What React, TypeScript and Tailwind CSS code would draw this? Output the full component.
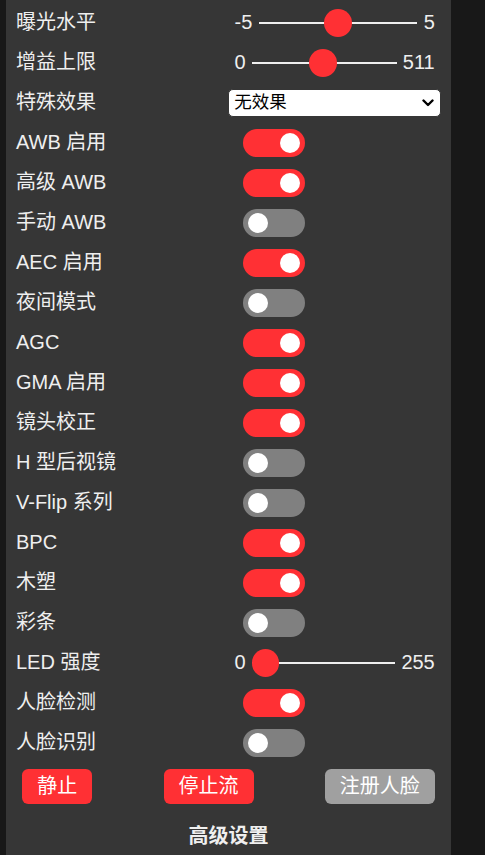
type Row =
  | { kind: "range"; label: string; min: number; max: number; value: number }
  | { kind: "select"; label: string; value: string }
  | { kind: "switch"; label: string; on: boolean }

const rows: Row[] = [
  { kind: "range", label: "曝光水平", min: -5, max: 5, value: 0 },
  { kind: "range", label: "增益上限", min: 0, max: 511, value: 249 },
  { kind: "select", label: "特殊效果", value: "无效果" },
  { kind: "switch", label: "AWB 启用", on: true },
  { kind: "switch", label: "高级 AWB", on: true },
  { kind: "switch", label: "手动 AWB", on: false },
  { kind: "switch", label: "AEC 启用", on: true },
  { kind: "switch", label: "夜间模式", on: false },
  { kind: "switch", label: "AGC", on: true },
  { kind: "switch", label: "GMA 启用", on: true },
  { kind: "switch", label: "镜头校正", on: true },
  { kind: "switch", label: "H 型后视镜", on: false },
  { kind: "switch", label: "V-Flip 系列", on: false },
  { kind: "switch", label: "BPC", on: true },
  { kind: "switch", label: "木塑", on: true },
  { kind: "switch", label: "彩条", on: false },
  { kind: "range", label: "LED 强度", min: 0, max: 255, value: 0 },
  { kind: "switch", label: "人脸检测", on: true },
  { kind: "switch", label: "人脸识别", on: false },
]

function RangeControl({ min, max, value }: { min: number; max: number; value: number }) {
  const f = (value - min) / (max - min)
  return (
    <div className="flex flex-1 items-center">
      <span className="px-[6.25px]">{min}</span>
      <div className="relative h-[27.5px] flex-1">
        <div className="absolute top-[12.5px] right-0 left-0 h-[2.5px] bg-[#efefef]" />
        <div
          className="absolute top-0 h-[27.5px] w-[27.5px] rounded-full bg-[#ff3034]"
          style={{ left: `calc(${f * 100}% - ${f * 27.5}px)` }}
        />
      </div>
      <span className="px-[6.25px]">{max}</span>
    </div>
  )
}

function SelectControl({ value }: { value: string }) {
  return (
    <div className="flex h-[27.5px] flex-1 items-center justify-between rounded-[5px] border-[1.25px] border-[#363636] bg-white pr-[6px] pl-[5px] text-[17.5px] leading-none text-black">
      <span>{value}</span>
      <svg width="12" height="8" viewBox="0 0 12 8" fill="none">
        <polyline points="1.5,1.5 6,6 10.5,1.5" stroke="#000" strokeWidth="2.4" strokeLinecap="round" strokeLinejoin="round" />
      </svg>
    </div>
  )
}

function Switch({ on }: { on: boolean }) {
  return (
    <div
      className={`ml-[14.25px] flex h-[27.5px] w-[62.5px] items-center rounded-full px-[5px] ${
        on ? "justify-end bg-[#ff3034]" : "justify-start bg-[#808080]"
      }`}
    >
      <div className="h-[20px] w-[20px] rounded-full bg-white" />
    </div>
  )
}

export default function App() {
  return (
    <div
      className="min-h-screen overflow-hidden bg-[#181818] pl-[6px] text-[20px] text-[#efefef]"
      style={{ fontFamily: '"Liberation Sans", Arial, "Noto Sans CJK SC", sans-serif' }}
    >
      <div className="-mt-[7px] flex w-[445px] flex-col rounded-[5px] bg-[#363636] px-[10px] pt-[10px] pb-[60px]">
        {rows.map((row) => (
          <div key={row.label} className="my-[6.25px] flex h-[27.5px] items-center leading-[27.5px]">
            <div className="w-[212.25px] shrink-0 pr-[12.5px] whitespace-nowrap">{row.label}</div>
            {row.kind === "range" && <RangeControl min={row.min} max={row.max} value={row.value} />}
            {row.kind === "select" && <SelectControl value={row.value} />}
            {row.kind === "switch" && <Switch on={row.on} />}
          </div>
        ))}
        <div className="flex justify-between">
          <button className="m-[6.25px] rounded-[6.25px] bg-[#ff3034] px-[15px] text-[20px] leading-[35px] text-white">
            静止
          </button>
          <button className="m-[6.25px] rounded-[6.25px] bg-[#ff3034] px-[15px] text-[20px] leading-[35px] text-white">
            停止流
          </button>
          <button className="m-[6.25px] rounded-[6.25px] bg-[#a0a0a0] px-[15px] text-[20px] leading-[35px] text-white">
            注册人脸
          </button>
        </div>
        <div className="mt-[14px] text-center leading-[23px] font-bold">高级设置</div>
      </div>
    </div>
  )
}
